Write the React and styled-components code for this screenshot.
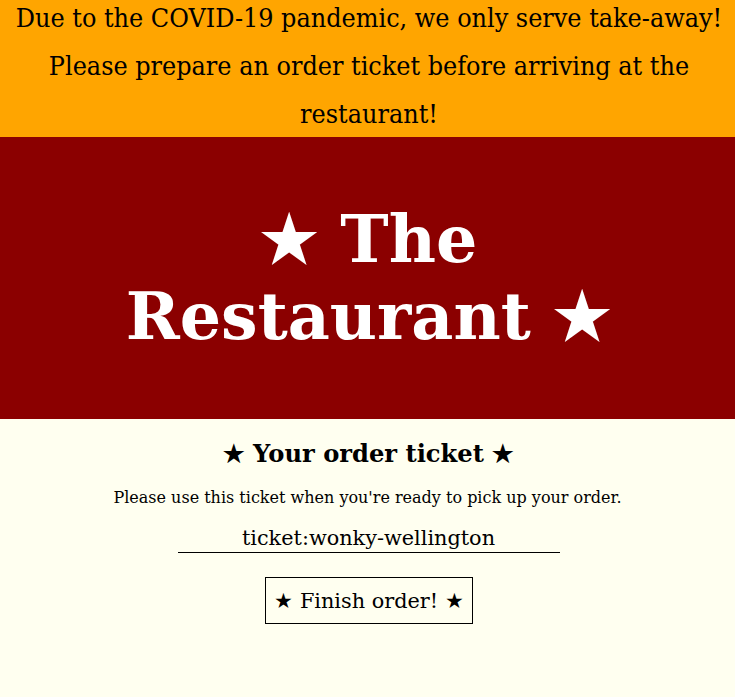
import React from 'react'
import styled, { createGlobalStyle } from 'styled-components'

const GlobalStyle = createGlobalStyle`
  html, body {
    margin: 0;
    padding: 0;
    background: #fffff0;
    font-family: "DejaVu Serif", "Liberation Serif", serif;
    color: #000;
  }
`

const Notice = styled.div`
  background: #ffa500;
  height: 137px;
  overflow: hidden;
  text-align: center;
  padding-left: 3px;
`

const NoticeText = styled.p`
  margin: -6px 0 0;
  font-size: 26.67px;
  font-stretch: condensed;
  line-height: 48px;
`

const Hero = styled.header`
  background: #8b0000;
  height: 282px;
  display: flex;
  align-items: center;
  justify-content: center;
  padding-left: 2px;
`

const Title = styled.h1`
  margin: 0;
  max-width: 560px;
  color: #fff;
  font-size: 65px;
  font-weight: bold;
  line-height: 77px;
  text-align: center;
`

const Ticket = styled.section`
  display: flex;
  flex-direction: column;
  align-items: center;
  padding-top: 20px;
`

const TicketHeading = styled.h2`
  margin: 0 0 0 2px;
  font-size: 24.2px;
  line-height: 30px;
`

const Hint = styled.p`
  margin: 19px 0 0;
  font-size: 16px;
  line-height: 20px;
`

const TicketField = styled.input`
  margin: 18px 0 0 2px;
  width: 382px;
  box-sizing: border-box;
  padding: 0 0 1px;
  border: none;
  border-bottom: 1px solid #000;
  background: transparent;
  font-family: inherit;
  font-size: 20.8px;
  line-height: 25px;
  text-align: center;
  color: #000;
  outline: none;
`

const FinishButton = styled.button`
  margin: 24px 0 0 3px;
  padding: 0 8px;
  height: 47px;
  border: 1px solid #000;
  background: transparent;
  font-family: inherit;
  font-size: 20.8px;
  color: #000;
  cursor: pointer;
`

const App = () => (
  <>
    <GlobalStyle />
    <Notice>
      <NoticeText>
        Due to the COVID-19 pandemic, we only serve take-away! Please prepare an order ticket before arriving at the restaurant!
      </NoticeText>
    </Notice>
    <Hero>
      <Title>★ The Restaurant ★</Title>
    </Hero>
    <Ticket>
      <TicketHeading>★ Your order ticket ★</TicketHeading>
      <Hint>Please use this ticket when you're ready to pick up your order.</Hint>
      <TicketField readOnly value="ticket:wonky-wellington" />
      <FinishButton>★ Finish order! ★</FinishButton>
    </Ticket>
  </>
)

export default App
